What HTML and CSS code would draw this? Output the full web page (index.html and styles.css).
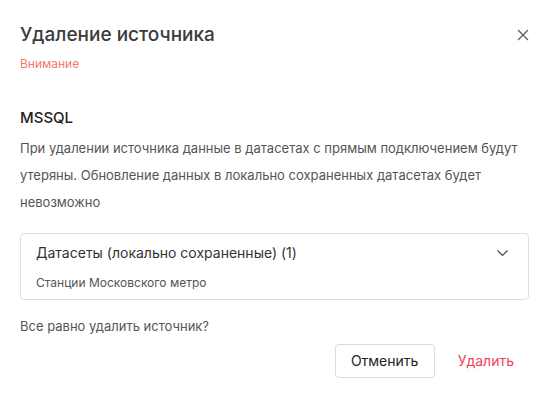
FILE: index.html
```html
<!DOCTYPE html>
<html lang="ru">
<head>
<meta charset="utf-8">
<link rel="stylesheet" href="styles.css">
</head>
<body>
<div class="dialog">
  <div class="header">
    <div class="heading">
      <h1 class="title">Удаление источника</h1>
      <div class="warning">Внимание</div>
    </div>
    <button class="close" aria-label="Закрыть">
      <svg width="12" height="12" viewBox="0 0 12 12"><path d="M1 1L11 11M11 1L1 11" stroke="#555a66" stroke-width="1.2" fill="none"/></svg>
    </button>
  </div>
  <div class="source">MSSQL</div>
  <p class="desc">При удалении источника данные в датасетах с прямым подключением будут утеряны. Обновление данных в локально сохраненных датасетах будет невозможно</p>
  <div class="box">
    <div class="box-head">
      <span class="box-title">Датасеты (локально сохраненные) (1)</span>
      <svg class="chevron" width="11" height="6" viewBox="0 0 11 6"><path d="M0.5 0.5L5.5 5.5L10.5 0.5" stroke="#444" stroke-width="1.1" fill="none"/></svg>
    </div>
    <div class="box-item">Станции Московского метро</div>
  </div>
  <div class="question">Все равно удалить источник?</div>
  <div class="actions">
    <button class="btn btn-cancel">Отменить</button>
    <button class="btn btn-delete">Удалить</button>
  </div>
</div>
</body>
</html>
```
FILE: styles.css
```css
html, body {
  margin: 0;
  padding: 0;
  background: #fff;
}
body {
  font-family: Inter, "Noto Sans", sans-serif;
  color: #333;
}
.dialog {
  width: 552px;
  height: 400px;
  box-sizing: border-box;
  padding: 23px 23px 0 20px;
}
.header {
  display: flex;
  justify-content: space-between;
  align-items: flex-start;
}
.title {
  margin: 0;
  font-size: 19px;
  line-height: 24px;
  font-weight: 500;
  color: #3b3b3b;
}
.warning {
  margin-top: 9px;
  font-size: 12px;
  line-height: 16px;
  color: #f5796d;
}
.close {
  border: 0;
  background: none;
  padding: 0;
  margin: 6px 0 0 0;
  width: 12px;
  height: 12px;
  display: flex;
}
.source {
  margin-top: 36px;
  font-size: 15px;
  line-height: 20px;
  font-weight: 500;
  color: #222;
}
.desc {
  margin: 7px 0 0 0;
  font-size: 13px;
  line-height: 27px;
  color: #555;
}
.box {
  margin-top: 17px;
  border: 1px solid #dddfe8;
  border-radius: 4px;
  padding: 9px 20px 8px 15px;
}
.box-head {
  display: flex;
  justify-content: space-between;
  align-items: center;
}
.box-title {
  font-size: 14px;
  line-height: 20px;
  color: #333;
}
.box-item {
  margin-top: 12px;
  font-size: 12px;
  line-height: 16px;
  color: #555;
}
.question {
  margin-top: 17px;
  font-size: 13px;
  line-height: 18px;
  color: #555;
}
.actions {
  display: flex;
  justify-content: flex-end;
  align-items: center;
  gap: 8px;
  margin-top: 9px;
}
.btn {
  font-family: inherit;
  font-size: 14px;
  line-height: 20px;
  background: #fff;
  cursor: pointer;
}
.btn-cancel {
  width: 100px;
  height: 34px;
  border: 1px solid #d6d9e8;
  border-radius: 4px;
  color: #222;
}
.btn-delete {
  border: 0;
  padding: 0 15px;
  height: 34px;
  color: #f0425d;
}
```
